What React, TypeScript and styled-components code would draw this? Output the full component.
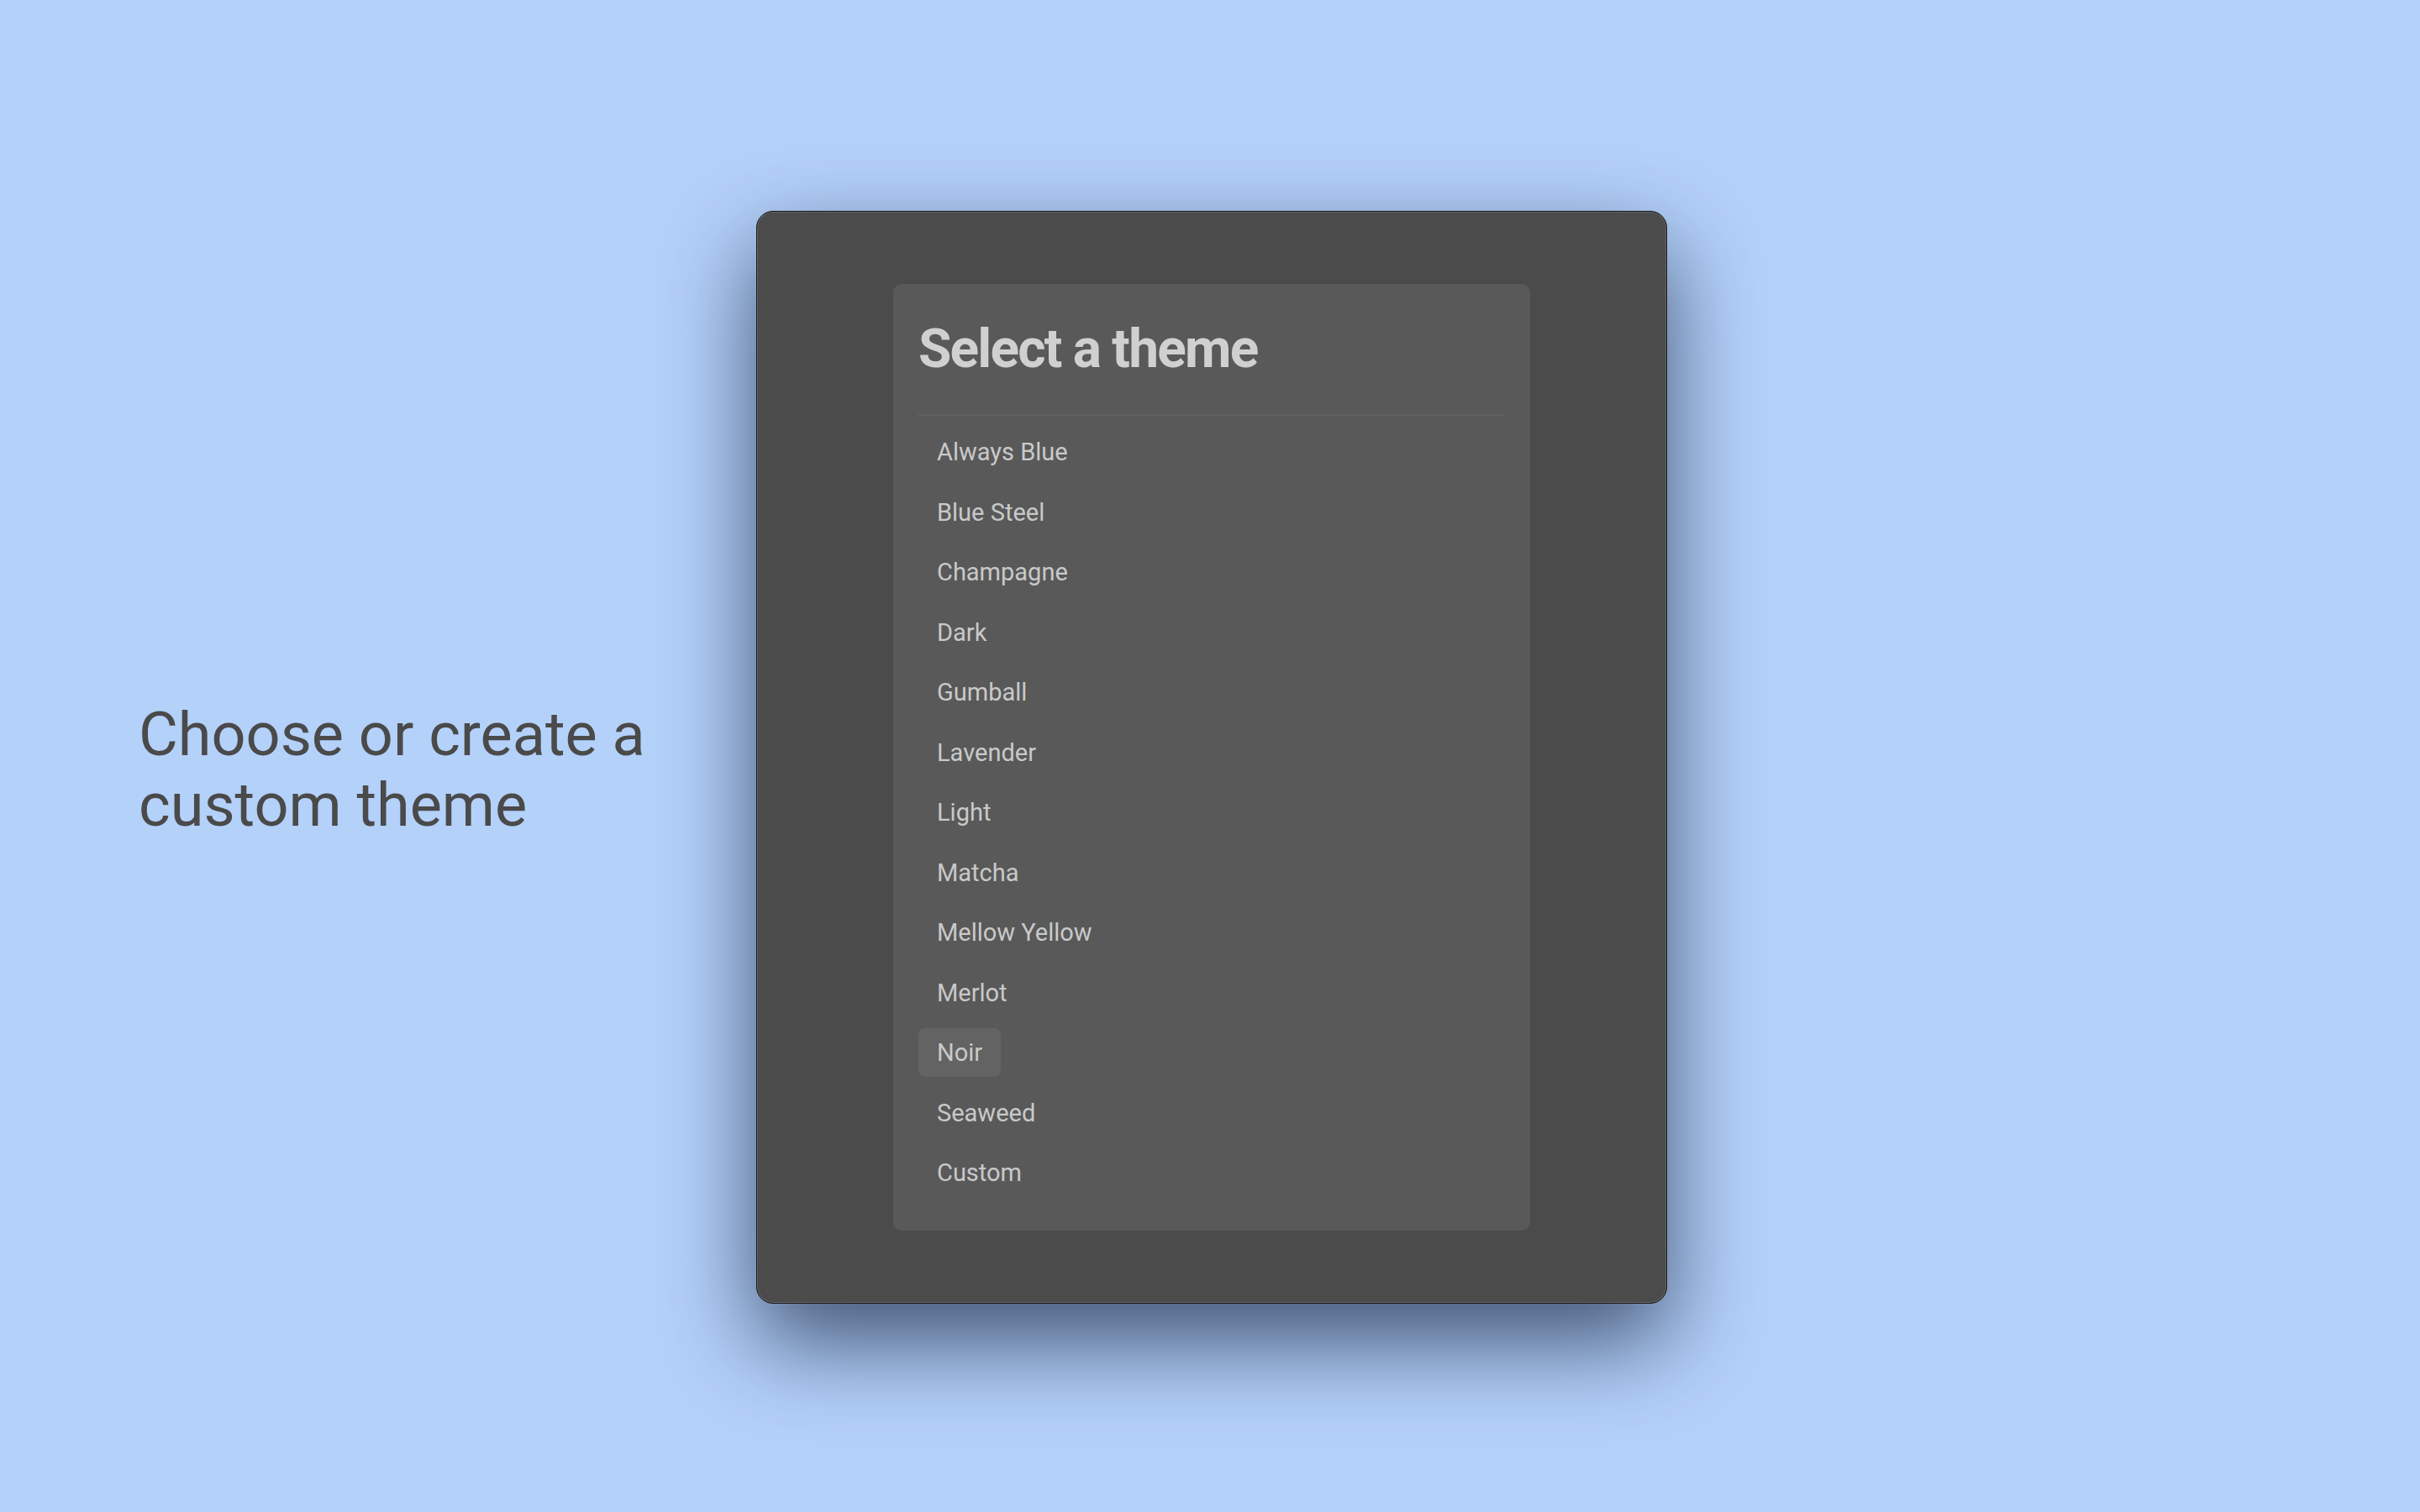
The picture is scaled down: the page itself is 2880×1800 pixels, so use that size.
import React from "react";
import styled, { createGlobalStyle } from "styled-components";

const GlobalStyle = createGlobalStyle`
  html, body {
    margin: 0;
    padding: 0;
    background: #b4d1fa;
  }
  * { box-sizing: border-box; }
`;

const Page = styled.div`
  width: 2880px;
  height: 1800px;
  display: grid;
  grid-template-columns: 900px 1084px 1fr;
  align-items: center;
  background: #b4d1fa;
  font-family: Roboto, "Liberation Sans", sans-serif;
  overflow: hidden;
`;

const Tagline = styled.h1`
  margin: 34px 0 0 0;
  padding-left: 165px;
  font-size: 72px;
  line-height: 84px;
  font-weight: 400;
  color: #4a4a4a;
`;

const Window = styled.div`
  width: 1084px;
  height: 1301px;
  margin-top: 3px;
  border-radius: 20px;
  background: #4b4b4b;
  border: 1px solid #151515;
  box-shadow: inset 0 0 0 1px rgba(255, 255, 255, 0.16),
    0 45px 110px rgba(15, 28, 55, 0.7);
  display: flex;
  align-items: center;
  justify-content: center;
`;

const Panel = styled.section`
  width: 758px;
  height: 1127px;
  border-radius: 10px;
  background: #595959;
  padding: 40px 30px 38px 30px;
  display: flex;
  flex-direction: column;
`;

const Title = styled.h2`
  margin: 0 0 38px 0;
  font-size: 64px;
  line-height: 76.8px;
  font-weight: 700;
  color: #d0d0d0;
  letter-spacing: -1.8px;
`;

const Divider = styled.div`
  margin: 0 0 14.5px 0;
  height: 2px;
  background: #626262;
`;

const List = styled.ul`
  margin: 0;
  padding: 0;
  list-style: none;
  display: flex;
  flex-direction: column;
  align-items: flex-start;
  gap: 13.5px;
`;

const Item = styled.li<{ $active?: boolean }>`
  height: 58px;
  display: inline-flex;
  align-items: center;
  padding: 0 22px;
  border-radius: 8px;
  font-size: 29px;
  line-height: 34px;
  color: #c9c9c9;
  background: ${(p) => (p.$active ? "#636363" : "transparent")};
`;

const themes = [
  "Always Blue",
  "Blue Steel",
  "Champagne",
  "Dark",
  "Gumball",
  "Lavender",
  "Light",
  "Matcha",
  "Mellow Yellow",
  "Merlot",
  "Noir",
  "Seaweed",
  "Custom",
];

export default function App() {
  return (
    <>
      <GlobalStyle />
      <Page>
        <Tagline>
          Choose or create a
          <br />
          custom theme
        </Tagline>
        <Window>
          <Panel>
            <Title>Select a theme</Title>
            <Divider />
            <List>
              {themes.map((t) => (
                <Item key={t} $active={t === "Noir"}>
                  {t}
                </Item>
              ))}
            </List>
          </Panel>
        </Window>
        <div />
      </Page>
    </>
  );
}
